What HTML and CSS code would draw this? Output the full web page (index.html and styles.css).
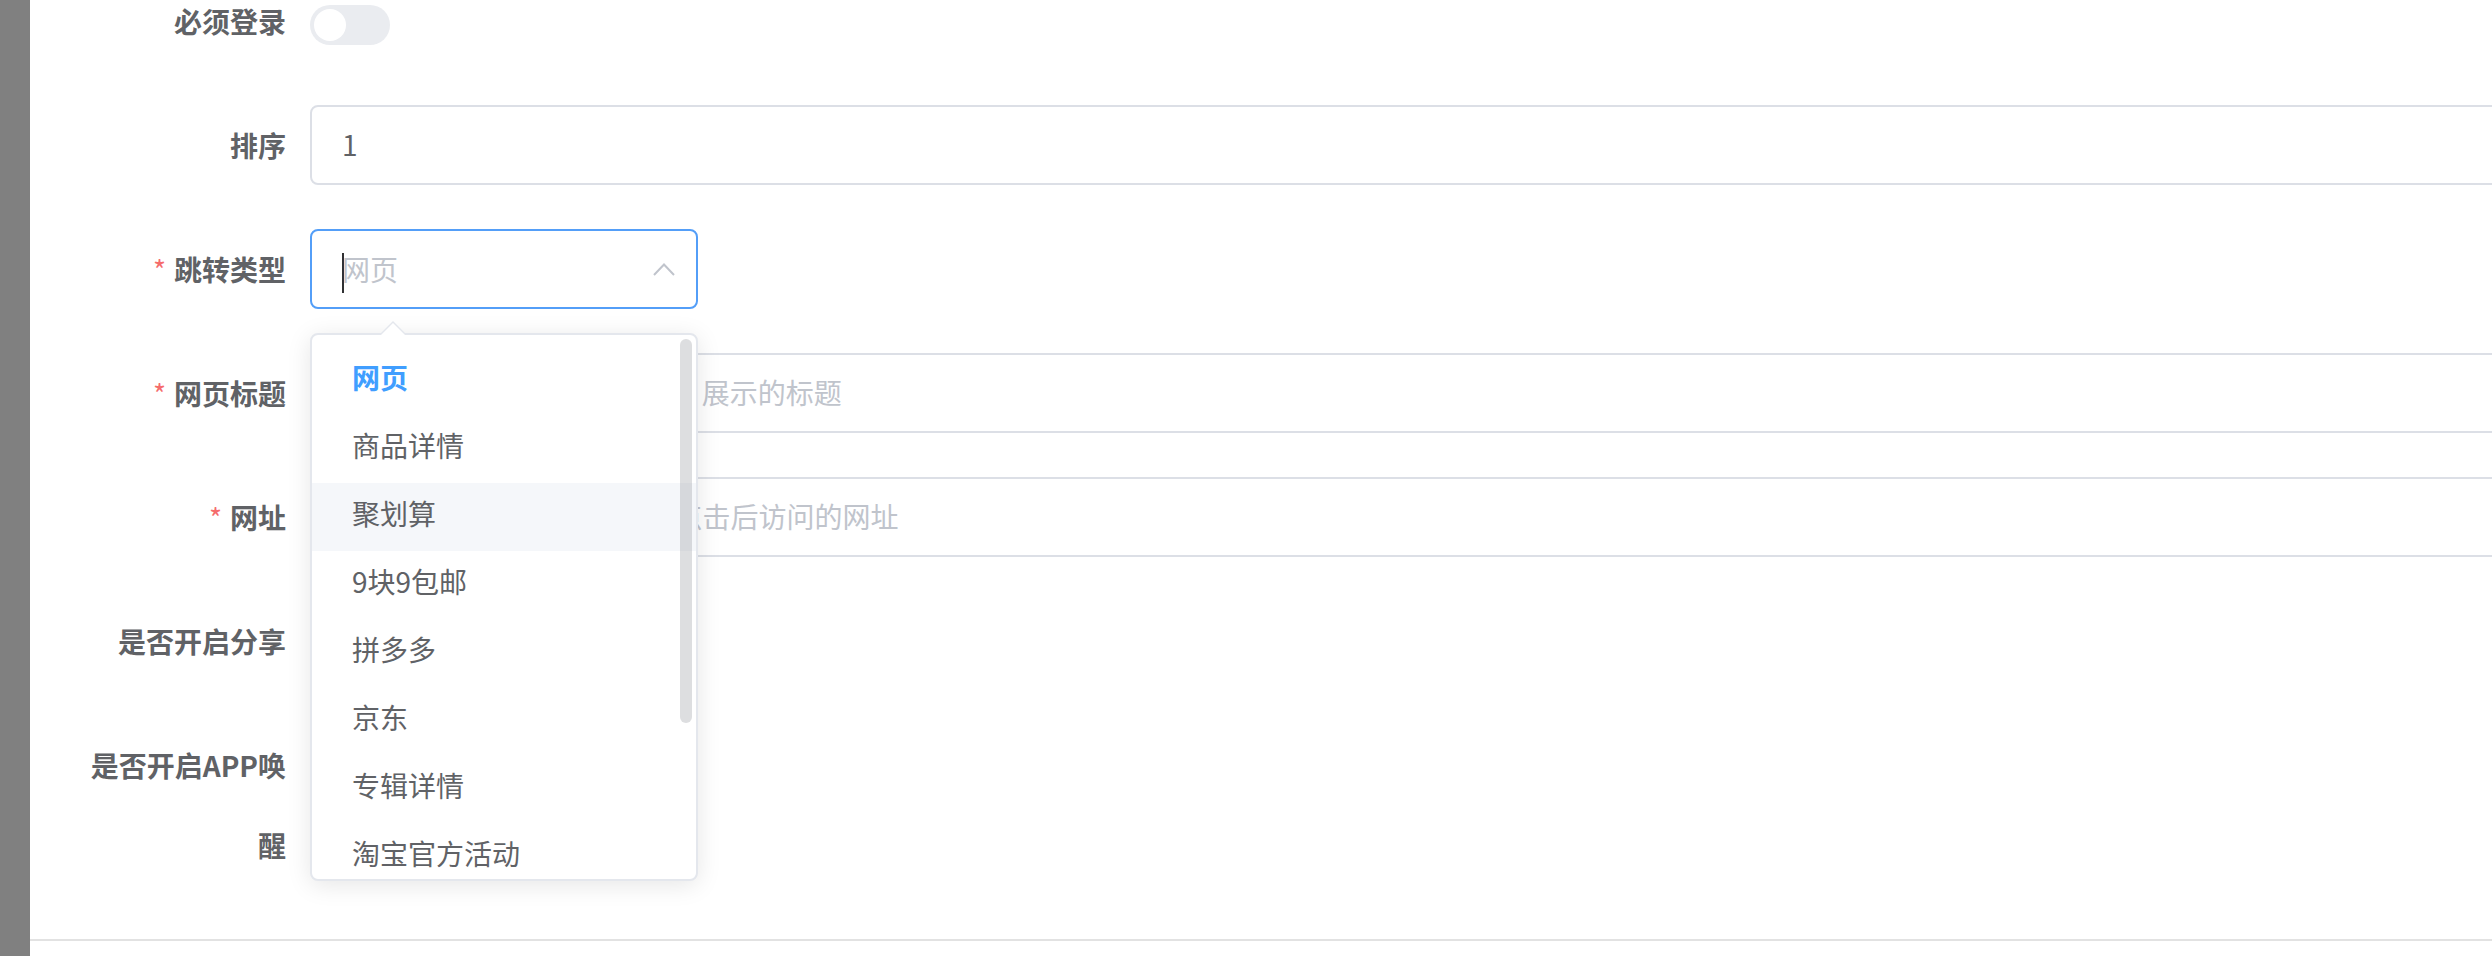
FILE: index.html
```html
<!DOCTYPE html>
<html lang="zh-CN">
<head>
    <meta charset="UTF-8">
    <meta name="viewport" content="width=device-width, initial-scale=1.0">
    <title>编辑广告</title>
    <link rel="stylesheet" href="styles.css">
</head>
<body>
    <div class="mask"></div>
    <div class="drawer">
        <div class="drawer-body">
            <form class="edit-form">
                <div class="form-item">
                    <label class="form-label">必须登录</label>
                    <div class="form-content"><span class="switch"></span></div>
                </div>
                <div class="form-item">
                    <label class="form-label">排序</label>
                    <div class="form-content"><div class="input">1</div></div>
                </div>
                <div class="form-item">
                    <label class="form-label required">跳转类型</label>
                    <div class="form-content">
                        <div class="input select">
                            <span><span class="caret"></span><span class="placeholder">网页</span></span>
                            <svg class="arrow-icon" width="22" height="13" viewBox="0 0 22 13">
                                <polyline points="1,12 11,1.5 21,12" fill="none" stroke="#C0C4CC" stroke-width="2"/>
                            </svg>
                        </div>
                        <div class="select-dropdown">
                            <div class="dropdown-arrow"></div>
                            <div class="dropdown-wrap">
                                <ul class="dropdown-list">
                                    <li class="dropdown-item selected">网页</li>
                                    <li class="dropdown-item">商品详情</li>
                                    <li class="dropdown-item hover">聚划算</li>
                                    <li class="dropdown-item">9块9包邮</li>
                                    <li class="dropdown-item">拼多多</li>
                                    <li class="dropdown-item">京东</li>
                                    <li class="dropdown-item">专辑详情</li>
                                    <li class="dropdown-item">淘宝官方活动</li>
                                </ul>
                            </div>
                            <div class="scrollbar-thumb"></div>
                        </div>
                    </div>
                </div>
                <div class="form-item">
                    <label class="form-label required">网页标题</label>
                    <div class="form-content"><div class="input placeholder">请输入网页标题（在App内）展示的标题</div></div>
                </div>
                <div class="form-item">
                    <label class="form-label required">网址</label>
                    <div class="form-content"><div class="input placeholder">请输入网址，用户在APP内点击后访问的网址</div></div>
                </div>
                <div class="form-item">
                    <label class="form-label">是否开启分享</label>
                    <div class="form-content"><span class="switch"></span></div>
                </div>
                <div class="form-item">
                    <label class="form-label">是否开启APP唤醒</label>
                    <div class="form-content"><span class="switch"></span></div>
                </div>
            </form>
        </div>
        <div class="drawer-footer"></div>
    </div>
</body>
</html>
```

FILE: styles.css
```css
/* General */
* {
    box-sizing: border-box;
}

html, body {
    margin: 0;
    height: 100%;
}

body {
    display: flex;
    overflow: hidden;
    background-color: #fff;
    font-family: "Noto Sans CJK SC", "Noto Sans", sans-serif;
    color: #606266;
}

.mask {
    width: 30px;
    flex-shrink: 0;
    background-color: #808080;
}

/* Drawer */
.drawer {
    flex: 1;
    display: flex;
    flex-direction: column;
    overflow: hidden;
}

.drawer-body {
    padding: 0 0 10px 40px;
}

.drawer-footer {
    flex: 1;
    border-top: 2px solid #e2e2e2;
}

/* Form */
.edit-form {
    width: 2600px;
    margin-top: -19px;
}

.form-item {
    display: flex;
    margin-bottom: 44px;
}

.form-label {
    width: 240px;
    flex-shrink: 0;
    padding-right: 24px;
    text-align: right;
    font-size: 28px;
    line-height: 80px;
    font-weight: 700;
    color: #606266;
}

.form-label.required::before {
    content: "*";
    color: #f56c6c;
    margin-right: 8px;
    font-weight: 400;
}

.form-content {
    flex: 1;
    position: relative;
    font-size: 28px;
    line-height: 80px;
}

.input {
    height: 80px;
    padding: 0 30px;
    border: 2px solid #dcdfe6;
    border-radius: 8px;
    font-size: 28px;
    line-height: 74px;
    color: #606266;
    white-space: nowrap;
    overflow: hidden;
}

.placeholder {
    color: #c0c4cc;
}

/* Select */
.select {
    width: 388px;
    display: flex;
    align-items: center;
    justify-content: space-between;
    padding-right: 21px;
    border-color: #539ef8;
}

.caret {
    display: inline-block;
    width: 2px;
    height: 40px;
    margin-right: -2px;
    vertical-align: middle;
    background-color: #303133;
}

.arrow-icon {
    display: block;
}

.select-dropdown {
    position: absolute;
    top: 104px;
    left: 0;
    width: 388px;
    z-index: 10;
    background-color: #fff;
    border: 2px solid #e4e7ed;
    border-radius: 8px;
    box-shadow: 0 4px 24px rgba(0, 0, 0, 0.1);
}

.dropdown-arrow {
    position: absolute;
    top: -14px;
    left: 69px;
    width: 0;
    height: 0;
    border: 12px solid transparent;
    border-top-width: 0;
    border-bottom-color: #e4e7ed;
}

.dropdown-arrow::after {
    content: "";
    position: absolute;
    top: 2px;
    left: -12px;
    border: 12px solid transparent;
    border-top-width: 0;
    border-bottom-color: #fff;
}

.dropdown-wrap {
    max-height: 544px;
    overflow: hidden;
    border-radius: 6px;
}

.dropdown-list {
    list-style: none;
    margin: 0;
    padding: 12px 0;
}

.dropdown-item {
    height: 68px;
    padding: 0 40px;
    font-size: 28px;
    line-height: 61px;
    color: #606266;
    white-space: nowrap;
}

.dropdown-item.selected {
    color: #409eff;
    font-weight: 700;
}

.dropdown-item.hover {
    background-color: #f5f7fa;
}

.scrollbar-thumb {
    position: absolute;
    top: 4px;
    right: 4px;
    width: 12px;
    height: 384px;
    border-radius: 6px;
    background-color: rgba(144, 147, 153, 0.3);
}

/* Switch */
.switch {
    display: inline-block;
    position: relative;
    width: 80px;
    height: 40px;
    vertical-align: middle;
    border-radius: 20px;
    background-color: #eaecf0;
}

.switch::after {
    content: "";
    position: absolute;
    top: 4px;
    left: 4px;
    width: 32px;
    height: 32px;
    border-radius: 50%;
    background-color: #fff;
}
```
